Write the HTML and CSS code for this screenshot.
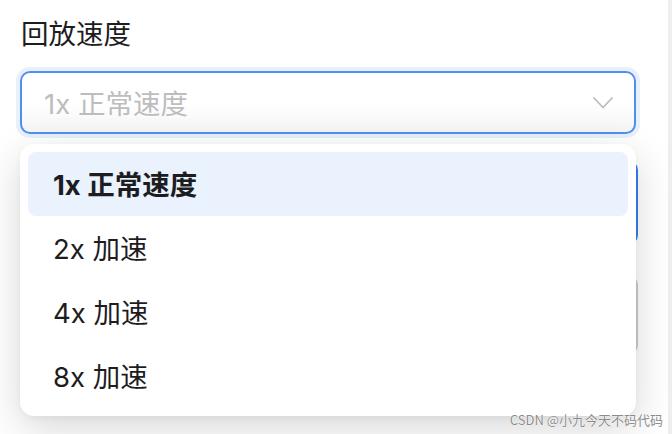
FILE: index.html
```html
<!DOCTYPE html>
<html lang="zh-CN">
<head>
    <meta charset="UTF-8">
    <meta name="viewport" content="width=device-width, initial-scale=1.0">
    <title>回放速度</title>
    <link rel="stylesheet" href="styles.css">
</head>
<body>
    <div class="page">
        <label class="field-label">回放速度</label>

        <div class="select-wrap">
            <div class="select open">
                <span class="placeholder">1x 正常速度</span>
                <svg class="chevron" width="20" height="12" viewBox="0 0 20 12">
                    <polyline points="1,1 10,10.5 19,1" fill="none" stroke="#bcbcbc" stroke-width="1.8" stroke-linecap="round" stroke-linejoin="round"/>
                </svg>
            </div>

            <ul class="menu">
                <li class="option selected">1x 正常速度</li>
                <li class="option">2x 加速</li>
                <li class="option">4x 加速</li>
                <li class="option">8x 加速</li>
            </ul>
        </div>

        <button class="primary">开始回放</button>
        <div class="log-box"></div>

        <span class="watermark">CSDN @小九今天不码代码</span>
    </div>
</body>
</html>
```

FILE: styles.css
```css
body {
    margin: 0;
    background: #eeeeee;
    font-family: "Inter", "Noto Sans CJK SC", sans-serif;
    color: #1d1d1f;
}
.page {
    position: relative;
    width: 668px;
    height: 434px;
    box-sizing: border-box;
    padding: 15px 32px 0 20px;
    background: #ffffff;
    overflow: hidden;
}
.field-label {
    display: block;
    font-size: 27.5px;
    line-height: 38px;
    padding-left: 1px;
    margin-bottom: 18px;
}
.select-wrap {
    position: relative;
}
.select {
    height: 63px;
    box-sizing: border-box;
    border: 2px solid #4f8ff4;
    border-radius: 10px;
    background: linear-gradient(180deg, #ffffff 50%, #f5f5f5);
    display: flex;
    align-items: center;
    justify-content: space-between;
    padding: 0 21px 2px 22px;
}
.select.open {
    box-shadow: 0 0 0 4px #e8f0fc;
}
.placeholder {
    font-size: 27.5px;
    color: #bdbdbd;
}
.chevron {
    display: block;
    margin-top: 2px;
}
.menu {
    position: absolute;
    top: calc(100% + 10px);
    left: 0;
    right: 0;
    z-index: 2;
    margin: 0;
    padding: 8px;
    list-style: none;
    background: #ffffff;
    border-radius: 14px;
    box-shadow: 0 12px 40px rgba(0, 0, 0, 0.16), 0 2px 6px rgba(0, 0, 0, 0.04);
}
.option {
    height: 64px;
    box-sizing: border-box;
    display: flex;
    align-items: center;
    padding: 0 0 3px 25px;
    font-size: 27.5px;
    border-radius: 8px;
}
.option.selected {
    background: #e9f2fd;
    font-weight: 700;
}
.primary {
    display: block;
    width: calc(100% + 2px);
    height: 85px;
    margin-top: 26px;
    border: 2px solid #3b7cf0;
    border-radius: 10px;
    background: #ffffff;
    font-size: 24px;
}
.log-box {
    width: calc(100% + 2px);
    height: 80px;
    margin-top: 30px;
    box-sizing: border-box;
    border: 2px solid #cccccc;
    border-radius: 10px;
}
.watermark {
    position: absolute;
    right: 5px;
    bottom: 5px;
    z-index: 3;
    font-family: "Noto Sans CJK SC", sans-serif;
    font-size: 13px;
    color: #8c8c8c;
    text-shadow: 0 0 1px #ffffff, 0 0 1px #ffffff, 0 0 1px #ffffff;
}
```
